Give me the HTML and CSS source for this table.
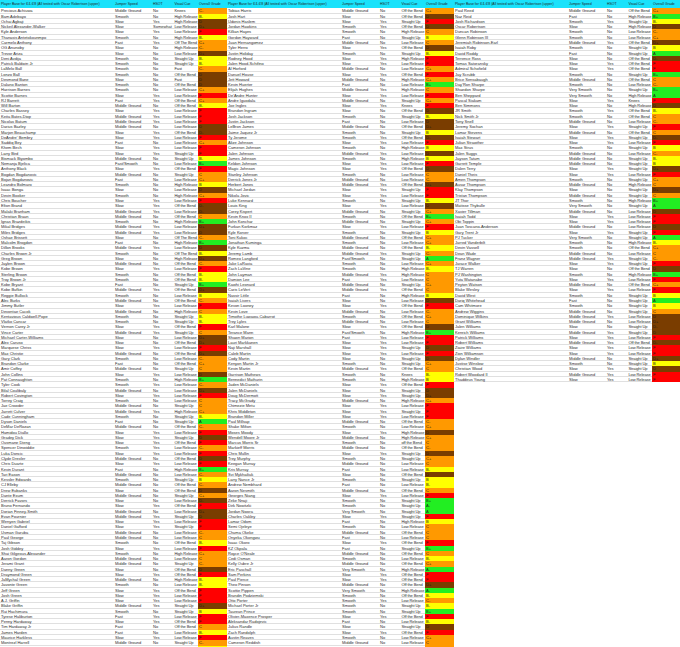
FILE: index.html
```html
<!DOCTYPE html>
<html lang="en">
<head>
<meta charset="utf-8">
<title>Player Base for 6'4-6'8</title>
<link rel="stylesheet" href="styles.css">
</head>
<body>
<div class="sheet">
<table class="grid">
<colgroup><col class="cn"><col class="cj"><col class="ch"><col class="cv"><col class="cg"></colgroup>
<thead><tr><th>Player Base for 6'4-6'8 (All tested with Oscar Robertson (upper)</th><th>Jumper Speed</th><th>HSOT</th><th>Visual Cue</th><th>Overall Grade</th></tr></thead>
<tbody>
<tr><td>Precious Achiuwa</td><td>Middle Ground</td><td>No</td><td>Knees</td><td class="c">C-</td></tr>
<tr><td>Bam Adebayo</td><td>Smooth</td><td>No</td><td>High Release</td><td class="b">B-</td></tr>
<tr><td>Ochai Agbaji</td><td>Slow</td><td>Yes</td><td>High Release</td><td class="d">D</td></tr>
<tr><td>Nickeil Alexander-Walker</td><td>Slow</td><td>Somewhat</td><td>Low Release</td><td class="d">D+</td></tr>
<tr><td>Kyle Anderson</td><td>Slow</td><td>Yes</td><td>Low Release</td><td class="f">F</td></tr>
<tr><td>Thanasis Antetokounmpo</td><td>Smooth</td><td>No</td><td>High Release</td><td class="b">B-</td></tr>
<tr><td>Carmelo Anthony</td><td>Fast</td><td>Yes</td><td>Off The Bend</td><td class="c">C+</td></tr>
<tr><td>OG Anunoby</td><td>Slow</td><td>No</td><td>High Release</td><td class="c">C-</td></tr>
<tr><td>Trevor Ariza</td><td>Slow</td><td>No</td><td>Low Release</td><td class="d">D+</td></tr>
<tr><td>Deni Avdija</td><td>Smooth</td><td>No</td><td>Straight Up</td><td class="b">B-</td></tr>
<tr><td>Patrick Baldwin Jr</td><td>Smooth</td><td>No</td><td>Straight Up</td><td class="b">B-</td></tr>
<tr><td>LaMelo Ball</td><td>Smooth</td><td>No</td><td>Fast</td><td class="c">C-</td></tr>
<tr><td>Lonzo Ball</td><td>Smooth</td><td>No</td><td>Off the Bend</td><td class="d">D</td></tr>
<tr><td>Desmond Bane</td><td>Slow</td><td>No</td><td>Fast</td><td class="d">D</td></tr>
<tr><td>Dalano Banton</td><td>Smooth</td><td>No</td><td>Off the Bend</td><td class="d">D</td></tr>
<tr><td>Harrison Barnes</td><td>Smooth</td><td>No</td><td>Low Release</td><td class="c">C+</td></tr>
<tr><td>Scottie Barnes</td><td>Slow</td><td>Yes</td><td>Low Release</td><td class="f">F</td></tr>
<tr><td>RJ Barrett</td><td>Fast</td><td>Yes</td><td>Off the Bend</td><td class="c">C+</td></tr>
<tr><td>Will Barton</td><td>Middle Ground</td><td>No</td><td>Off the Bend</td><td class="b">B-</td></tr>
<tr><td>Charles Bassey</td><td>Slow</td><td>Yes</td><td>Low Release</td><td class="f">F</td></tr>
<tr><td>Keita Bates-Diop</td><td>Middle Ground</td><td>Yes</td><td>Low Release</td><td class="f">F</td></tr>
<tr><td>Nicolas Batum</td><td>Middle Ground</td><td>Yes</td><td>Low Release</td><td class="f">F</td></tr>
<tr><td>Darius Bazley</td><td>Middle Ground</td><td>No</td><td>Low Release</td><td class="d">D</td></tr>
<tr><td>Marjon Beauchamp</td><td>Slow</td><td>Yes</td><td>Off the Bend</td><td class="d">D-</td></tr>
<tr><td>DeAndre' Bembry</td><td>Slow</td><td>Yes</td><td>Low Release</td><td class="f">F</td></tr>
<tr><td>Saddiq Bey</td><td>Fast</td><td>No</td><td>Low Release</td><td class="c">C+</td></tr>
<tr><td>Khem Birch</td><td>Slow</td><td>Yes</td><td>Low Release</td><td class="f">F</td></tr>
<tr><td>Larry Bird</td><td>Slow</td><td>Yes</td><td>Straight Up</td><td class="f">F</td></tr>
<tr><td>Bismack Biyombo</td><td>Middle Ground</td><td>No</td><td>Straight Up</td><td class="b">B-</td></tr>
<tr><td>Nemanja Bjelica</td><td>Fast/Smooth</td><td>No</td><td>Low Release</td><td class="a">B+</td></tr>
<tr><td>Anthony Black</td><td>Slow</td><td>Yes</td><td>Off the Bend</td><td class="f">F</td></tr>
<tr><td>Bogdan Bogdanovic</td><td>Middle Ground</td><td>No</td><td>Straight Up</td><td class="c">C</td></tr>
<tr><td>Bojan Bogdanovic</td><td>Fast</td><td>No</td><td>Low Release</td><td class="c">C+</td></tr>
<tr><td>Leandro Bolmaro</td><td>Smooth</td><td>No</td><td>High Release</td><td class="b">B</td></tr>
<tr><td>Isaac Bonga</td><td>Slow</td><td>No</td><td>Low Release</td><td class="d">D</td></tr>
<tr><td>Devin Booker</td><td>Smooth</td><td>No</td><td>High Release</td><td class="c">C+</td></tr>
<tr><td>Chris Boucher</td><td>Slow</td><td>Yes</td><td>Low Release</td><td class="f">F</td></tr>
<tr><td>Elton Brand</td><td>Slow</td><td>Yes</td><td>Off the Bend</td><td class="d">D-</td></tr>
<tr><td>Malaki Branham</td><td>Middle Ground</td><td>Yes</td><td>Low Release</td><td class="d">D-</td></tr>
<tr><td>Christian Braun</td><td>Middle Ground</td><td>No</td><td>Off the Bend</td><td class="c">C</td></tr>
<tr><td>Ignas Brazdeikis</td><td>Smooth</td><td>No</td><td>High Release</td><td class="a">B+</td></tr>
<tr><td>Mikal Bridges</td><td>Middle Ground</td><td>Yes</td><td>Low Release</td><td class="d">D+</td></tr>
<tr><td>Miles Bridges</td><td>Middle Ground</td><td>Yes</td><td>Low Release</td><td class="d">D</td></tr>
<tr><td>Oshae Brissett</td><td>Slow</td><td>No</td><td>Off The Bend</td><td class="c">C-</td></tr>
<tr><td>Malcolm Brogdon</td><td>Fast</td><td>No</td><td>High Release</td><td class="a">B+</td></tr>
<tr><td>Dillon Brooks</td><td>Middle Ground</td><td>Yes</td><td>Low Release</td><td class="d">D</td></tr>
<tr><td>Charles Brown Jr</td><td>Smooth</td><td>No</td><td>Off The Bend</td><td class="b">B-</td></tr>
<tr><td>Greg Brown</td><td>Slow</td><td>No</td><td>High Release</td><td class="d">D+</td></tr>
<tr><td>Jaylen Brown</td><td>Middle Ground</td><td>No</td><td>Off the Bend</td><td class="c">C-</td></tr>
<tr><td>Kobe Brown</td><td>Slow</td><td>Yes</td><td>Low Release</td><td class="f">F</td></tr>
<tr><td>Sterling Brown</td><td>Smooth</td><td>No</td><td>Off the Bend</td><td class="b">B-</td></tr>
<tr><td>Troy Brown Jr</td><td>Smooth</td><td>No</td><td>Off the Bend</td><td class="b">B-</td></tr>
<tr><td>Kobe Bryant</td><td>Fast</td><td>No</td><td>Straight Up</td><td class="a">B+</td></tr>
<tr><td>Kobe Bufkin</td><td>Middle Ground</td><td>Yes</td><td>Off the Bend</td><td class="d">D+</td></tr>
<tr><td>Reggie Bullock</td><td>Smooth</td><td>No</td><td>Low Release</td><td class="b">B</td></tr>
<tr><td>Alec Burks</td><td>Middle Ground</td><td>No</td><td>Off the Bend</td><td class="c">C-</td></tr>
<tr><td>Jimmy Butler</td><td>Slow</td><td>Yes</td><td>Low Release</td><td class="f">F</td></tr>
<tr><td>Devontae Cacok</td><td>Middle Ground</td><td>No</td><td>High Release</td><td class="c">C</td></tr>
<tr><td>Kentavious Caldwell-Pope</td><td>Smooth</td><td>No</td><td>Straight Up</td><td class="b">B-</td></tr>
<tr><td>Vlatko Cancar</td><td>Smooth</td><td>No</td><td>Straight Up</td><td class="b">B-</td></tr>
<tr><td>Vernon Carey Jr</td><td>Slow</td><td>Yes</td><td>Off the Bend</td><td class="f">F</td></tr>
<tr><td>Vince Carter</td><td>Middle Ground</td><td>Yes</td><td>Straight Up</td><td class="c">C</td></tr>
<tr><td>Michael Carter-Williams</td><td>Slow</td><td>No</td><td>Low Release</td><td class="d">D+</td></tr>
<tr><td>Alex Caruso</td><td>Slow</td><td>No</td><td>Off the Bend</td><td class="d">D+</td></tr>
<tr><td>Marquese Chriss</td><td>Slow</td><td>Yes</td><td>Low Release</td><td class="f">F</td></tr>
<tr><td>Max Christie</td><td>Middle Ground</td><td>No</td><td>Off the Bend</td><td class="d">D+</td></tr>
<tr><td>Gary Clark</td><td>Smooth</td><td>No</td><td>Low Release</td><td class="c">C-</td></tr>
<tr><td>Brandon Clarke</td><td>Fast</td><td>No</td><td>Off the Bend</td><td class="c">C+</td></tr>
<tr><td>Amir Coffey</td><td>Middle Ground</td><td>No</td><td>Straight Up</td><td class="c">C</td></tr>
<tr><td>John Collins</td><td>Slow</td><td>Yes</td><td>Low Release</td><td class="d">D</td></tr>
<tr><td>Pat Connaughton</td><td>Smooth</td><td>No</td><td>High Release</td><td class="a">B+</td></tr>
<tr><td>Tyler Cook</td><td>Smooth</td><td>Yes</td><td>Low Release</td><td class="c">C-</td></tr>
<tr><td>Bilal Coulibaly</td><td>Middle Ground</td><td>No</td><td>Low Release</td><td class="d">D+</td></tr>
<tr><td>Robert Covington</td><td>Slow</td><td>Yes</td><td>Low Release</td><td class="f">F</td></tr>
<tr><td>Torrey Craig</td><td>Smooth</td><td>No</td><td>Low Release</td><td class="c">C</td></tr>
<tr><td>Jae Crowder</td><td>Middle Ground</td><td>No</td><td>Straight Up</td><td class="c">C</td></tr>
<tr><td>Jarrett Culver</td><td>Middle Ground</td><td>Yes</td><td>High Release</td><td class="c">C+</td></tr>
<tr><td>Cade Cunningham</td><td>Smooth</td><td>No</td><td>Straight Up</td><td class="b">B-</td></tr>
<tr><td>Dyson Daniels</td><td>Fast</td><td>No</td><td>Straight Up</td><td class="a">A</td></tr>
<tr><td>DeMar DeRozan</td><td>Middle Ground</td><td>No</td><td>Off the Bend</td><td class="c">C-</td></tr>
<tr><td>Hamidou Diallo</td><td>Slow</td><td>Yes</td><td>Low Release</td><td class="f">F</td></tr>
<tr><td>Gradey Dick</td><td>Slow</td><td>Yes</td><td>Straight Up</td><td class="d">D</td></tr>
<tr><td>Ousmane Dieng</td><td>Slow</td><td>Yes</td><td>Off the Bend</td><td class="f">F</td></tr>
<tr><td>Spencer Dinwiddie</td><td>Smooth</td><td>Yes</td><td>Low Release</td><td class="c">C-</td></tr>
<tr><td>Luka Doncic</td><td>Slow</td><td>Yes</td><td>Low Release</td><td class="f">F</td></tr>
<tr><td>Clyde Drexler</td><td>Middle Ground</td><td>No</td><td>Off the Bend</td><td class="d">D</td></tr>
<tr><td>Chris Duarte</td><td>Slow</td><td>Yes</td><td>Low Release</td><td class="f">F</td></tr>
<tr><td>Kevin Durant</td><td>Fast</td><td>No</td><td>High Release</td><td class="a">B+</td></tr>
<tr><td>Tari Eason</td><td>Middle Ground</td><td>No</td><td>Low Release</td><td class="c">C-</td></tr>
<tr><td>Kessler Edwards</td><td>Smooth</td><td>No</td><td>Straight Up</td><td class="b">B</td></tr>
<tr><td>CJ Elleby</td><td>Middle Ground</td><td>No</td><td>Off the Bend</td><td class="c">C-</td></tr>
<tr><td>Drew Eubanks</td><td>Slow</td><td>No</td><td>Off the Bend</td><td class="d">D</td></tr>
<tr><td>Dante Exum</td><td>Middle Ground</td><td>No</td><td>Straight Up</td><td class="c">C+</td></tr>
<tr><td>Derrick Favors</td><td>Slow</td><td>No</td><td>Low Release</td><td class="d">D-</td></tr>
<tr><td>Bruno Fernando</td><td>Slow</td><td>Yes</td><td>Off the Bend</td><td class="f">F</td></tr>
<tr><td>Dorian Finney-Smith</td><td>Middle Ground</td><td>No</td><td>Low Release</td><td class="d">D+</td></tr>
<tr><td>Evan Fournier</td><td>Middle Ground</td><td>Yes</td><td>Straight Up</td><td class="d">D</td></tr>
<tr><td>Wenyen Gabriel</td><td>Slow</td><td>Yes</td><td>Low Release</td><td class="f">F</td></tr>
<tr><td>Daniel Gafford</td><td>Slow</td><td>Yes</td><td>Straight Up</td><td class="f">F</td></tr>
<tr><td>Usman Garuba</td><td>Middle Ground</td><td>No</td><td>Low Release</td><td class="c">C-</td></tr>
<tr><td>Paul George</td><td>Middle Ground</td><td>No</td><td>Low Release</td><td class="c">C</td></tr>
<tr><td>Taj Gibson</td><td>Smooth</td><td>No</td><td>Off the Bend</td><td class="b">B-</td></tr>
<tr><td>Josh Giddey</td><td>Slow</td><td>Yes</td><td>Low Release</td><td class="f">F</td></tr>
<tr><td>Shai Gilgeous-Alexander</td><td>Smooth</td><td>No</td><td>High Release</td><td class="c">C+</td></tr>
<tr><td>Aaron Gordon</td><td>Middle Ground</td><td>No</td><td>Low Release</td><td class="c">C</td></tr>
<tr><td>Jerami Grant</td><td>Middle Ground</td><td>No</td><td>Straight Up</td><td class="c">C-</td></tr>
<tr><td>Danny Green</td><td>Slow</td><td>No</td><td>Off the Bend</td><td class="d">D</td></tr>
<tr><td>Draymond Green</td><td>Slow</td><td>Yes</td><td>Off the Bend</td><td class="f">F</td></tr>
<tr><td>JaMychal Green</td><td>Middle Ground</td><td>No</td><td>High Release</td><td class="b">B-</td></tr>
<tr><td>Javonte Green</td><td>Smooth</td><td>No</td><td>Low Release</td><td class="b">B-</td></tr>
<tr><td>Jeff Green</td><td>Slow</td><td>Yes</td><td>Off the Bend</td><td class="f">F</td></tr>
<tr><td>Josh Green</td><td>Slow</td><td>Yes</td><td>Low Release</td><td class="f">F</td></tr>
<tr><td>A.J. Griffin</td><td>Slow</td><td>Yes</td><td>Low Release</td><td class="f">F</td></tr>
<tr><td>Blake Griffin</td><td>Middle Ground</td><td>Yes</td><td>Straight Up</td><td class="d">D+</td></tr>
<tr><td>Rui Hachimura</td><td>Smooth</td><td>No</td><td>Straight Up</td><td class="b">B</td></tr>
<tr><td>Tyrese Haliburton</td><td>Fast</td><td>Yes</td><td>Low Release</td><td class="f">F</td></tr>
<tr><td>Penny Hardaway</td><td>Slow</td><td>Yes</td><td>Off the Bend</td><td class="f">F</td></tr>
<tr><td>Tim Hardaway Jr</td><td>Fast</td><td>No</td><td>Off the Bend</td><td class="c">C</td></tr>
<tr><td>James Harden</td><td>Fast</td><td>No</td><td>Low Release</td><td class="b">B-</td></tr>
<tr><td>Maurice Harkless</td><td>Slow</td><td>Yes</td><td>Low Release</td><td class="f">F</td></tr>
<tr><td>Montrezl Harrell</td><td>Middle Ground</td><td>No</td><td>Straight Up</td><td class="c">C-</td></tr>
<tr><td>Joe Harris</td><td>Smooth</td><td>No</td><td>High Release</td><td class="b">B-</td></tr>
</tbody>
</table>
<table class="grid">
<colgroup><col class="cn"><col class="cj"><col class="ch"><col class="cv"><col class="cg"></colgroup>
<thead><tr><th>Player Base for 6'4-6'8 (All tested with Oscar Robertson (upper)</th><th>Jumper Speed</th><th>HSOT</th><th>Visual Cue</th><th>Overall Grade</th></tr></thead>
<tbody>
<tr><td>Tobias Harris</td><td>Middle Ground</td><td>No</td><td>Off the Bend</td><td class="c">C+</td></tr>
<tr><td>Josh Hart</td><td>Slow</td><td>No</td><td>Off the Bend</td><td class="d">D</td></tr>
<tr><td>Udonis Haslem</td><td>Slow</td><td>Yes</td><td>Straight Up</td><td class="f">F</td></tr>
<tr><td>Jordan Hawkins</td><td>Smooth</td><td>Yes</td><td>Off the Bend</td><td class="d">D</td></tr>
<tr><td>Killian Hayes</td><td>Smooth</td><td>No</td><td>High Release</td><td class="c">C</td></tr>
<tr><td>Gordon Hayward</td><td>Fast</td><td>No</td><td>Straight Up</td><td class="b">B</td></tr>
<tr><td>Juan Hernangomez</td><td>Middle Ground</td><td>No</td><td>Low Release</td><td class="c">C</td></tr>
<tr><td>Tyler Herro</td><td>Slow</td><td>Yes</td><td>Off the Bend</td><td class="d">D</td></tr>
<tr><td>Justin Holiday</td><td>Smooth</td><td>No</td><td>Straight Up</td><td class="b">B-</td></tr>
<tr><td>Rodney Hood</td><td>Slow</td><td>Yes</td><td>High Release</td><td class="f">F</td></tr>
<tr><td>Jalen Hood-Schifino</td><td>Slow</td><td>Yes</td><td>Low Release</td><td class="f">F</td></tr>
<tr><td>Al Horford</td><td>Middle Ground</td><td>No</td><td>Low Release</td><td class="c">C+</td></tr>
<tr><td>Danuel House</td><td>Slow</td><td>Yes</td><td>Off the Bend</td><td class="f">F</td></tr>
<tr><td>Jett Howard</td><td>Middle Ground</td><td>No</td><td>High Release</td><td class="c">C+</td></tr>
<tr><td>Kevin Huerter</td><td>Fast</td><td>No</td><td>Low Release</td><td class="a">B+</td></tr>
<tr><td>Elijah Hughes</td><td>Middle Ground</td><td>Yes</td><td>High Release</td><td class="c">C</td></tr>
<tr><td>De'Andre Hunter</td><td>Slow</td><td>Yes</td><td>Low Release</td><td class="f">F</td></tr>
<tr><td>Andre Iguodala</td><td>Middle Ground</td><td>No</td><td>Straight Up</td><td class="c">C+</td></tr>
<tr><td>Joe Ingles</td><td>Slow</td><td>Yes</td><td>Knees</td><td class="f">F</td></tr>
<tr><td>Brandon Ingram</td><td>Slow</td><td>No</td><td>Off the Bend</td><td class="d">D</td></tr>
<tr><td>Josh Jackson</td><td>Smooth</td><td>No</td><td>Straight Up</td><td class="b">B-</td></tr>
<tr><td>Justin Jackson</td><td>Fast</td><td>No</td><td>Low Release</td><td class="d">D</td></tr>
<tr><td>LeBron James</td><td>Middle Ground</td><td>No</td><td>Off the Bend</td><td class="d">D+</td></tr>
<tr><td>Jaime Jaquez Jr</td><td>Smooth</td><td>No</td><td>Straight Up</td><td class="b">B</td></tr>
<tr><td>Ty Jerome</td><td>Smooth</td><td>Yes</td><td>Off the Bend</td><td class="d">D-</td></tr>
<tr><td>Alize Johnson</td><td>Slow</td><td>Yes</td><td>Low Release</td><td class="f">F</td></tr>
<tr><td>Cameron Johnson</td><td>Smooth</td><td>No</td><td>High Release</td><td class="b">B</td></tr>
<tr><td>Jalen Johnson</td><td>Middle Ground</td><td>Yes</td><td>Low Release</td><td class="d">D</td></tr>
<tr><td>James Johnson</td><td>Smooth</td><td>No</td><td>High Release</td><td class="b">B</td></tr>
<tr><td>Keldon Johnson</td><td>Slow</td><td>Yes</td><td>Low Release</td><td class="f">F</td></tr>
<tr><td>Magic Johnson</td><td>Slow</td><td>Yes</td><td>Off the Bend</td><td class="d">D</td></tr>
<tr><td>Stanley Johnson</td><td>Smooth</td><td>No</td><td>Low Release</td><td class="c">C</td></tr>
<tr><td>Derrick Jones Jr</td><td>Middle Ground</td><td>No</td><td>Low Release</td><td class="c">C-</td></tr>
<tr><td>Herbert Jones</td><td>Middle Ground</td><td>Yes</td><td>Off the Bend</td><td class="d">D+</td></tr>
<tr><td>Michael Jordan</td><td>Slow</td><td>Yes</td><td>Straight Up</td><td class="f">F</td></tr>
<tr><td>Nikola Jovic</td><td>Slow</td><td>Yes</td><td>Low Release</td><td class="f">F</td></tr>
<tr><td>Luke Kennard</td><td>Smooth</td><td>No</td><td>Straight Up</td><td class="b">B-</td></tr>
<tr><td>Louis King</td><td>Slow</td><td>Yes</td><td>Low Release</td><td class="d">D</td></tr>
<tr><td>Corey Kispert</td><td>Middle Ground</td><td>No</td><td>Straight Up</td><td class="c">C+</td></tr>
<tr><td>Kevin Knox II</td><td>Smooth</td><td>No</td><td>Off the Bend</td><td class="a">B+</td></tr>
<tr><td>John Konchar</td><td>Middle Ground</td><td>No</td><td>Straight Up</td><td class="c">C+</td></tr>
<tr><td>Furkan Korkmaz</td><td>Slow</td><td>Yes</td><td>Low Release</td><td class="f">F</td></tr>
<tr><td>Kyle Korver</td><td>Smooth</td><td>No</td><td>Straight Up</td><td class="b">B</td></tr>
<tr><td>Toni Kukoc</td><td>Middle Ground</td><td>No</td><td>Off the Bend</td><td class="c">C+</td></tr>
<tr><td>Jonathan Kuminga</td><td>Smooth</td><td>No</td><td>Low Release</td><td class="c">C+</td></tr>
<tr><td>Kyle Kuzma</td><td>Middle Ground</td><td>No</td><td>Off the Bend</td><td class="b">B-</td></tr>
<tr><td>Jeremy Lamb</td><td>Middle Ground</td><td>Yes</td><td>Straight Up</td><td class="c">C-</td></tr>
<tr><td>Romeo Langford</td><td>Fast/Smooth</td><td>No</td><td>Straight Up</td><td class="a">A</td></tr>
<tr><td>Jake LaRavia</td><td>Smooth</td><td>No</td><td>Low Release</td><td class="c">C+</td></tr>
<tr><td>Zach LaVine</td><td>Smooth</td><td>No</td><td>High Release</td><td class="b">B-</td></tr>
<tr><td>John Layman</td><td>Middle Ground</td><td>Yes</td><td>High Release</td><td class="c">C</td></tr>
<tr><td>Damion Lee</td><td>Fast</td><td>Yes</td><td>Low Release</td><td class="c">C</td></tr>
<tr><td>Kawhi Leonard</td><td>Middle Ground</td><td>No</td><td>Straight Up</td><td class="c">C+</td></tr>
<tr><td>Caris LeVert</td><td>Middle Ground</td><td>Yes</td><td>Off the Bend</td><td class="c">C</td></tr>
<tr><td>Nassir Little</td><td>Fast</td><td>No</td><td>High Release</td><td class="b">B</td></tr>
<tr><td>Isaiah Livers</td><td>Slow</td><td>No</td><td>Low Release</td><td class="d">D</td></tr>
<tr><td>Kevon Looney</td><td>Slow</td><td>Yes</td><td>Off the Bend</td><td class="f">F</td></tr>
<tr><td>Kevin Love</td><td>Middle Ground</td><td>No</td><td>Low Release</td><td class="c">C-</td></tr>
<tr><td>Timothe Luwawu-Cabarrot</td><td>Smooth</td><td>No</td><td>Off the Bend</td><td class="c">C+</td></tr>
<tr><td>Trey Lyles</td><td>Middle Ground</td><td>No</td><td>Low Release</td><td class="c">C</td></tr>
<tr><td>Karl Malone</td><td>Slow</td><td>Yes</td><td>Off the Bend</td><td class="d">D</td></tr>
<tr><td>Terance Mann</td><td>Fast/Smooth</td><td>No</td><td>High Release</td><td class="a">B+</td></tr>
<tr><td>Shawn Marion</td><td>Fast</td><td>Yes</td><td>Low Release</td><td class="f">F</td></tr>
<tr><td>Lauri Markkanen</td><td>Slow</td><td>Yes</td><td>Low Release</td><td class="f">F</td></tr>
<tr><td>Naji Marshall</td><td>Slow</td><td>Yes</td><td>Straight Up</td><td class="d">D</td></tr>
<tr><td>Caleb Martin</td><td>Slow</td><td>Yes</td><td>Low Release</td><td class="f">F</td></tr>
<tr><td>Cody Martin</td><td>Slow</td><td>No</td><td>Straight Up</td><td class="d">D</td></tr>
<tr><td>Kenyon Martin Jr</td><td>Smooth</td><td>No</td><td>Straight Up</td><td class="c">C+</td></tr>
<tr><td>Kevin Martin</td><td>Middle Ground</td><td>Yes</td><td>Off the Bend</td><td class="c">C</td></tr>
<tr><td>Garrison Mathews</td><td>Smooth</td><td>No</td><td>Knees</td><td class="b">B-</td></tr>
<tr><td>Bennedict Mathurin</td><td>Smooth</td><td>No</td><td>High Release</td><td class="b">B</td></tr>
<tr><td>Jaden McDaniels</td><td>Slow</td><td>Yes</td><td>Off the Bend</td><td class="f">F</td></tr>
<tr><td>Jalen McDaniels</td><td>Slow</td><td>No</td><td>Straight Up</td><td class="d">D</td></tr>
<tr><td>Doug McDermott</td><td>Slow</td><td>Yes</td><td>Straight Up</td><td class="d">D+</td></tr>
<tr><td>Tracy McGrady</td><td>Middle Ground</td><td>No</td><td>High Release</td><td class="c">C+</td></tr>
<tr><td>Chimezie Metu</td><td>Slow</td><td>Yes</td><td>Low Release</td><td class="f">F</td></tr>
<tr><td>Khris Middleton</td><td>Slow</td><td>Yes</td><td>Straight Up</td><td class="f">F</td></tr>
<tr><td>Brandon Miller</td><td>Slow</td><td>Yes</td><td>Low Release</td><td class="f">F</td></tr>
<tr><td>Paul Millsap</td><td>Middle Ground</td><td>No</td><td>Off the Bend</td><td class="c">C-</td></tr>
<tr><td>Shake Milton</td><td>Smooth</td><td>No</td><td>Low Release</td><td class="c">C+</td></tr>
<tr><td>Moses Moody</td><td>Slow</td><td>Yes</td><td>High Release</td><td class="d">D</td></tr>
<tr><td>Wendell Moore Jr</td><td>Middle Ground</td><td>No</td><td>High Release</td><td class="c">C+</td></tr>
<tr><td>Marcus Morris Sr</td><td>Smooth</td><td>No</td><td>off the Bend</td><td class="c">C</td></tr>
<tr><td>Markieff Morris</td><td>Middle Ground</td><td>No</td><td>Off the Bend</td><td class="c">C-</td></tr>
<tr><td>Chris Mullin</td><td>Slow</td><td>Yes</td><td>Straight Up</td><td class="d">D</td></tr>
<tr><td>Trey Murphy</td><td>Smooth</td><td>No</td><td>Straight Up</td><td class="c">C+</td></tr>
<tr><td>Keegan Murray</td><td>Middle Ground</td><td>No</td><td>Low Release</td><td class="c">C</td></tr>
<tr><td>Kris Murray</td><td>Fast</td><td>No</td><td>Low Release</td><td class="b">B-</td></tr>
<tr><td>Svi Mykhailiuk</td><td>Slow</td><td>No</td><td>Off the Bend</td><td class="d">D</td></tr>
<tr><td>Larry Nance Jr</td><td>Smooth</td><td>No</td><td>Straight Up</td><td class="b">B</td></tr>
<tr><td>Andrew Nembhard</td><td>Fast</td><td>No</td><td>Low Release</td><td class="b">B-</td></tr>
<tr><td>Aaron Nesmith</td><td>Middle Ground</td><td>No</td><td>Off the Bend</td><td class="c">C</td></tr>
<tr><td>Georges Niang</td><td>Slow</td><td>Yes</td><td>Low Release</td><td class="f">F</td></tr>
<tr><td>Zeke Nnaji</td><td>Smooth</td><td>No</td><td>Straight Up</td><td class="a">B+</td></tr>
<tr><td>Dirk Nowitzki</td><td>Smooth</td><td>No</td><td>Straight Up</td><td class="a">A-</td></tr>
<tr><td>Jordan Nwora</td><td>Very Smooth</td><td>No</td><td>Straight Up</td><td class="a">A</td></tr>
<tr><td>Charles Oakley</td><td>Slow</td><td>Yes</td><td>Straight Up</td><td class="f">F</td></tr>
<tr><td>Lamar Odom</td><td>Fast</td><td>No</td><td>High Release</td><td class="b">B</td></tr>
<tr><td>Semi Ojeleye</td><td>Smooth</td><td>No</td><td>Low Release</td><td class="c">C</td></tr>
<tr><td>Chuma Okeke</td><td>Middle Ground</td><td>No</td><td>Off the Bend</td><td class="c">C</td></tr>
<tr><td>Onyeka Okongwu</td><td>Fast</td><td>No</td><td>Low Release</td><td class="c">C</td></tr>
<tr><td>Isaac Okoro</td><td>Slow</td><td>Yes</td><td>Off the Bend</td><td class="f">F</td></tr>
<tr><td>KZ Okpala</td><td>Fast</td><td>No</td><td>Straight Up</td><td class="a">B+</td></tr>
<tr><td>Royce O'Neale</td><td>Middle Ground</td><td>No</td><td>Off the Bend</td><td class="c">C</td></tr>
<tr><td>Cedi Osman</td><td>Smooth</td><td>No</td><td>Low Release</td><td class="b">B-</td></tr>
<tr><td>Kelly Oubre Jr</td><td>Middle Ground</td><td>No</td><td>Off the Bend</td><td class="c">C+</td></tr>
<tr><td>Eric Paschall</td><td>Very Smooth</td><td>No</td><td>High Release</td><td class="a">A-</td></tr>
<tr><td>Sam Perkins</td><td>Slow</td><td>Yes</td><td>Off the Bend</td><td class="f">F</td></tr>
<tr><td>Paul Pierce</td><td>Slow</td><td>Yes</td><td>Off the Bend</td><td class="f">F</td></tr>
<tr><td>Theo Pinson</td><td>Middle Ground</td><td>No</td><td>Off the Bend</td><td class="d">D+</td></tr>
<tr><td>Scottie Pippen</td><td>Very Smooth</td><td>No</td><td>High Release</td><td class="a">A-</td></tr>
<tr><td>Brandin Podziemski</td><td>Smooth</td><td>No</td><td>Off the Bend</td><td class="b">B-</td></tr>
<tr><td>Otto Porter</td><td>Smooth</td><td>Yes</td><td>Low Release</td><td class="c">C-</td></tr>
<tr><td>Michael Porter Jr</td><td>Smooth</td><td>No</td><td>Straight Up</td><td class="b">B-</td></tr>
<tr><td>Taurean Prince</td><td>Smooth</td><td>No</td><td>Straight Up</td><td class="a">B+</td></tr>
<tr><td>Olivier-Maxence Prosper</td><td>Slow</td><td>Yes</td><td>Off the Bend</td><td class="f">F</td></tr>
<tr><td>Aleksandar Radojevic</td><td>Fast</td><td>No</td><td>Low Release</td><td class="b">B-</td></tr>
<tr><td>Julius Randle</td><td>Slow</td><td>No</td><td>Straight Up</td><td class="d">D</td></tr>
<tr><td>Zach Randolph</td><td>Slow</td><td>Yes</td><td>Off the Bend</td><td class="f">F</td></tr>
<tr><td>Austin Reaves</td><td>Smooth</td><td>No</td><td>Low Release</td><td class="c">C+</td></tr>
<tr><td>Cameron Reddish</td><td>Middle Ground</td><td>No</td><td>Low Release</td><td class="c">C</td></tr>
<tr><td>Davon Reed</td><td>Middle Ground</td><td>No</td><td>Low Release</td><td class="c">C</td></tr>
</tbody>
</table>
<table class="grid last">
<colgroup><col class="cn"><col class="cj"><col class="ch"><col class="cv"><col class="cg"></colgroup>
<thead><tr><th>Player Base for 6'4-6'8 (All tested with Oscar Robertson (upper)</th><th>Jumper Speed</th><th>HSOT</th><th>Visual Cue</th><th>Overall Grade</th></tr></thead>
<tbody>
<tr><td>Paul Reed</td><td>Middle Ground</td><td>No</td><td>Off the Bend</td><td class="c">C+</td></tr>
<tr><td>Naz Reid</td><td>Fast</td><td>No</td><td>High Release</td><td class="a">B+</td></tr>
<tr><td>Josh Richardson</td><td>Smooth</td><td>Yes</td><td>Straight Up</td><td class="b">B-</td></tr>
<tr><td>Oscar Robertson</td><td>Slow</td><td>No</td><td>High Release</td><td class="d">D</td></tr>
<tr><td>Duncan Robinson</td><td>Smooth</td><td>No</td><td>Low Release</td><td class="c">C-</td></tr>
<tr><td>Glenn Robinson III</td><td>Smooth</td><td>No</td><td>Low Release</td><td class="c">C+</td></tr>
<tr><td>Jeremiah Robinson-Earl</td><td>Middle Ground</td><td>Yes</td><td>Off the Bend</td><td class="d">D+</td></tr>
<tr><td>Isaiah Roby</td><td>Smooth</td><td>No</td><td>Straight Up</td><td class="b">B</td></tr>
<tr><td>David Roddy</td><td>Fast</td><td>No</td><td>Straight Up</td><td class="a">A</td></tr>
<tr><td>Terrence Ross</td><td>Slow</td><td>No</td><td>Off the Bend</td><td class="d">D-</td></tr>
<tr><td>Tomas Satoransky</td><td>Slow</td><td>Yes</td><td>Off the Bend</td><td class="f">F</td></tr>
<tr><td>Admiral Schofield</td><td>Slow</td><td>Yes</td><td>Off the Bend</td><td class="f">F</td></tr>
<tr><td>Jay Scrubb</td><td>Smooth</td><td>No</td><td>Straight Up</td><td class="a">B+</td></tr>
<tr><td>Brice Sensabaugh</td><td>Middle Ground</td><td>No</td><td>Off the Bend</td><td class="c">C</td></tr>
<tr><td>Day'Ron Sharpe</td><td>Smooth</td><td>No</td><td>Low Release</td><td class="c">C-</td></tr>
<tr><td>Shaedon Sharpe</td><td>Very Smooth</td><td>No</td><td>Straight Up</td><td class="a">B+</td></tr>
<tr><td>Ben Sheppard</td><td>Very Smooth</td><td>No</td><td>High Release</td><td class="a">A</td></tr>
<tr><td>Pascal Siakam</td><td>Slow</td><td>Yes</td><td>Knees</td><td class="f">F</td></tr>
<tr><td>Ben Simmons</td><td>Slow</td><td>No</td><td>High Release</td><td class="d">D</td></tr>
<tr><td>JR Smith</td><td>Smooth</td><td>Yes</td><td>Off the Bend</td><td class="b">B-</td></tr>
<tr><td>Nick Smith Jr</td><td>Smooth</td><td>No</td><td>Off the Bend</td><td class="c">C</td></tr>
<tr><td>Tony Snell</td><td>Middle Ground</td><td>No</td><td>Low Release</td><td class="c">C-</td></tr>
<tr><td>Jeremy Sochan</td><td>Slow</td><td>Yes</td><td>Straight Up</td><td class="f">F</td></tr>
<tr><td>Lamar Stevens</td><td>Middle Ground</td><td>No</td><td>Off the Bend</td><td class="c">C</td></tr>
<tr><td>Isaiah Stewart</td><td>Slow</td><td>Yes</td><td>Straight Up</td><td class="d">D-</td></tr>
<tr><td>Julian Strawther</td><td>Slow</td><td>Yes</td><td>Low Release</td><td class="f">F</td></tr>
<tr><td>Max Strus</td><td>Smooth</td><td>No</td><td>Straight Up</td><td class="b">B</td></tr>
<tr><td>Jalen Suggs</td><td>Middle Ground</td><td>No</td><td>Low Release</td><td class="c">C-</td></tr>
<tr><td>Jayson Tatum</td><td>Middle Ground</td><td>No</td><td>Straight Up</td><td class="b">B-</td></tr>
<tr><td>Garrett Temple</td><td>Middle Ground</td><td>No</td><td>Straight Up</td><td class="b">B</td></tr>
<tr><td>Dalen Terry</td><td>Slow</td><td>Yes</td><td>Straight Up</td><td class="d">D+</td></tr>
<tr><td>Daniel Theis</td><td>Slow</td><td>Yes</td><td>Low Release</td><td class="f">F</td></tr>
<tr><td>Amen Thompson</td><td>Smooth</td><td>No</td><td>Straight Up</td><td class="c">C+</td></tr>
<tr><td>Ausar Thompson</td><td>Middle Ground</td><td>No</td><td>High Release</td><td class="c">C</td></tr>
<tr><td>Klay Thompson</td><td>Slow</td><td>No</td><td>Straight Up</td><td class="d">D+</td></tr>
<tr><td>Tristan Thompson</td><td>Middle Ground</td><td>No</td><td>Straight Up</td><td class="c">C</td></tr>
<tr><td>JT Thor</td><td>Smooth</td><td>No</td><td>High Release</td><td class="a">B+</td></tr>
<tr><td>Matisse Thybulle</td><td>Very Smooth</td><td>No</td><td>Straight Up</td><td class="a">A</td></tr>
<tr><td>Xavier Tillman</td><td>Middle Ground</td><td>No</td><td>Low Release</td><td class="d">D</td></tr>
<tr><td>Isaiah Todd</td><td>Slow</td><td>Yes</td><td>Low Release</td><td class="f">F</td></tr>
<tr><td>Obi Toppin</td><td>Slow</td><td>Yes</td><td>Low Release</td><td class="f">F</td></tr>
<tr><td>Juan Toscano-Anderson</td><td>Middle Ground</td><td>No</td><td>Low Release</td><td class="d">D</td></tr>
<tr><td>Gary Trent Jr</td><td>Slow</td><td>Yes</td><td>Straight Up</td><td class="f">F</td></tr>
<tr><td>PJ Tucker</td><td>Very Smooth</td><td>No</td><td>Straight Up</td><td class="a">A</td></tr>
<tr><td>Jarred Vanderbilt</td><td>Smooth</td><td>No</td><td>High Release</td><td class="b">B-</td></tr>
<tr><td>Devin Vassell</td><td>Smooth</td><td>No</td><td>Off the Bend</td><td class="c">C+</td></tr>
<tr><td>Dean Wade</td><td>Middle Ground</td><td>No</td><td>Low Release</td><td class="c">C</td></tr>
<tr><td>Franz Wagner</td><td>Middle Ground</td><td>Yes</td><td>Straight Up</td><td class="c">C-</td></tr>
<tr><td>Jarace Walker</td><td>Slow</td><td>Yes</td><td>Straight Up</td><td class="f">F</td></tr>
<tr><td>TJ Warren</td><td>Slow</td><td>No</td><td>Off the Bend</td><td class="d">D</td></tr>
<tr><td>PJ Washington</td><td>Smooth</td><td>No</td><td>High Release</td><td class="a">B+</td></tr>
<tr><td>Yuta Watanabe</td><td>Slow</td><td>Yes</td><td>Low Release</td><td class="f">F</td></tr>
<tr><td>Peyton Watson</td><td>Middle Ground</td><td>No</td><td>Off the Bend</td><td class="c">C+</td></tr>
<tr><td>Blake Wesley</td><td>Slow</td><td>Yes</td><td>Low Release</td><td class="f">F</td></tr>
<tr><td>David West</td><td>Smooth</td><td>No</td><td>Straight Up</td><td class="b">B</td></tr>
<tr><td>Dariq Whitehead</td><td>Fast</td><td>No</td><td>Straight Up</td><td class="a">A</td></tr>
<tr><td>Cam Whitmore</td><td>Smooth</td><td>No</td><td>Straight Up</td><td class="b">B</td></tr>
<tr><td>Andrew Wiggins</td><td>Middle Ground</td><td>No</td><td>Straight Up</td><td class="c">C</td></tr>
<tr><td>Dominique Wilkins</td><td>Middle Ground</td><td>Yes</td><td>Low Release</td><td class="d">D</td></tr>
<tr><td>Grant Williams</td><td>Middle Ground</td><td>No</td><td>Low Release</td><td class="d">D+</td></tr>
<tr><td>Jalen Williams</td><td>Slow</td><td>No</td><td>Straight Up</td><td class="d">D-</td></tr>
<tr><td>Kenrich Williams</td><td>Middle Ground</td><td>Yes</td><td>Straight Up</td><td class="d">D</td></tr>
<tr><td>Patrick Williams</td><td>Slow</td><td>Yes</td><td>Low Release</td><td class="f">F</td></tr>
<tr><td>Robert Williams</td><td>Middle Ground</td><td>Yes</td><td>Off the Bend</td><td class="d">D-</td></tr>
<tr><td>Ziaire Williams</td><td>Slow</td><td>Yes</td><td>Low Release</td><td class="f">F</td></tr>
<tr><td>Zion Williamson</td><td>Slow</td><td>Yes</td><td>Low Release</td><td class="f">F</td></tr>
<tr><td>Dylan Windler</td><td>Middle Ground</td><td>No</td><td>Straight Up</td><td class="d">D+</td></tr>
<tr><td>Justise Winslow</td><td>Smooth</td><td>No</td><td>Straight Up</td><td class="b">B</td></tr>
<tr><td>Christian Wood</td><td>Slow</td><td>Yes</td><td>Straight Up</td><td class="d">D</td></tr>
<tr><td>Robert Woodard II</td><td>Middle Ground</td><td>Yes</td><td>Low Release</td><td class="f">F</td></tr>
<tr><td>Thaddeus Young</td><td>Slow</td><td>Yes</td><td>Low Release</td><td class="f">F</td></tr>
</tbody>
</table>
</div>
</body>
</html>
```

FILE: styles.css
```css
html, body {
  margin: 0;
  padding: 0;
  background: #ffffff;
  overflow: hidden;
}

.sheet {
  display: flex;
  align-items: flex-start;
  width: 680px;
  height: 647px;
  overflow: hidden;
  font-family: "Liberation Sans", Arial, sans-serif;
  color: #2b2b2b;
}

.grid {
  flex: none;
  width: 227px;
  table-layout: fixed;
  border-collapse: separate;
  border-spacing: 0;
}

.grid.last {
  width: 226px;
}

.cn { width: 114px; }
.cj { width: 38px; }
.ch { width: 22px; }
.cv { width: 24px; }
.cg { width: 29px; }
.last .cg { width: 28px; }

.grid th,
.grid td {
  padding: 0 0 0 1px;
  white-space: nowrap;
  overflow: hidden;
  text-align: left;
  font-weight: normal;
}

.grid th {
  height: 8.4px;
  background: #1ae2fb;
  font-size: 3.5px;
  line-height: 8.4px;
  vertical-align: middle;
  color: #1f1f1f;
}

.grid td {
  height: 5.26px;
  font-size: 4px;
  line-height: 5.26px;
  box-shadow: inset 0 -1px 0 #e0e0e0;
}

.grid td:nth-child(4),
.grid th:nth-child(4) {
  padding-left: 0.5px;
  letter-spacing: -0.1px;
}

.grid td.a,
.grid td.b,
.grid td.c,
.grid td.d,
.grid td.f {
  box-shadow: none;
  color: #1a1a1a;
}

.grid td.a { background: #22ee22; }
.grid td.b { background: #ffff00; }
.grid td.c { background: #ff9900; }
.grid td.d { background: #7a3d00; }
.grid td.f { background: #ff0000; }
```
